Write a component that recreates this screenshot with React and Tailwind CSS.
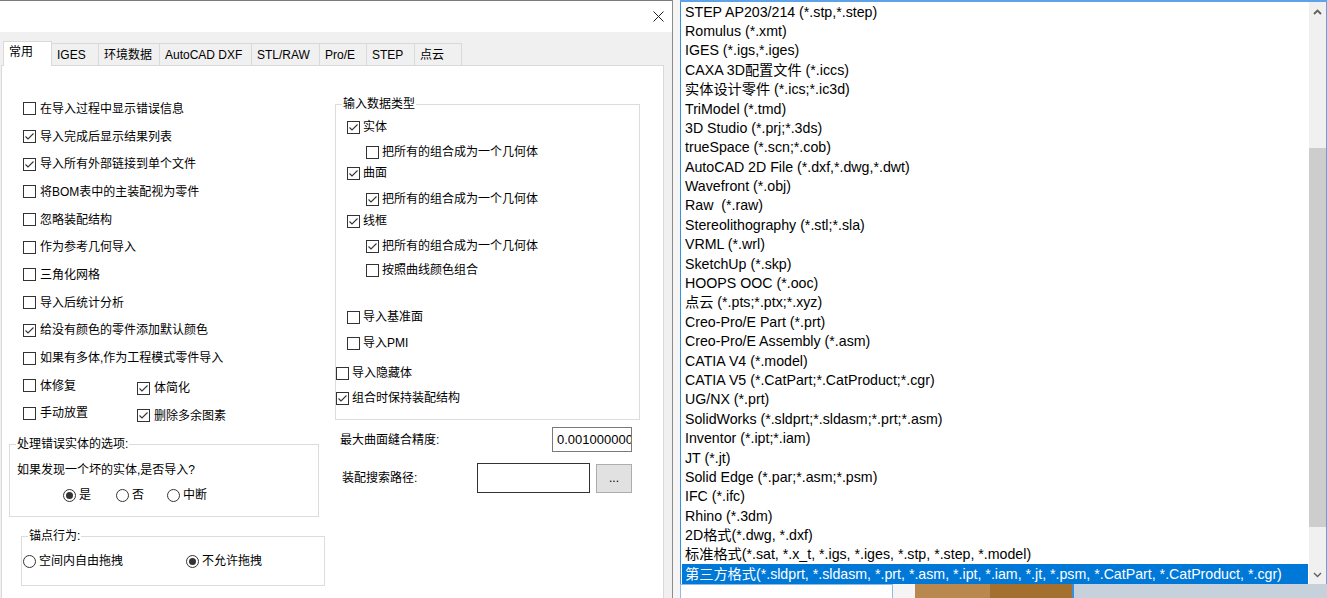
import React from 'react'

const fmts = [
    'STEP AP203/214 (*.stp,*.step)',
    'Romulus (*.xmt)',
    'IGES (*.igs,*.iges)',
    'CAXA 3D配置文件 (*.iccs)',
    '实体设计零件 (*.ics;*.ic3d)',
    'TriModel (*.tmd)',
    '3D Studio (*.prj;*.3ds)',
    'trueSpace (*.scn;*.cob)',
    'AutoCAD 2D File (*.dxf,*.dwg,*.dwt)',
    'Wavefront (*.obj)',
    'Raw  (*.raw)',
    'Stereolithography (*.stl;*.sla)',
    'VRML (*.wrl)',
    'SketchUp (*.skp)',
    'HOOPS OOC (*.ooc)',
    '点云 (*.pts;*.ptx;*.xyz)',
    'Creo-Pro/E Part (*.prt)',
    'Creo-Pro/E Assembly (*.asm)',
    'CATIA V4 (*.model)',
    'CATIA V5 (*.CatPart;*.CatProduct;*.cgr)',
    'UG/NX (*.prt)',
    'SolidWorks (*.sldprt;*.sldasm;*.prt;*.asm)',
    'Inventor (*.ipt;*.iam)',
    'JT (*.jt)',
    'Solid Edge (*.par;*.asm;*.psm)',
    'IFC (*.ifc)',
    'Rhino (*.3dm)',
    '2D格式(*.dwg, *.dxf)',
    '标准格式(*.sat, *.x_t, *.igs, *.iges, *.stp, *.step, *.model)',
    '第三方格式(*.sldprt, *.sldasm, *.prt, *.asm, *.ipt, *.iam, *.jt, *.psm, *.CatPart, *.CatProduct, *.cgr)',
]

const leftOpts = [
    ['在导入过程中显示错误信息', false],
    ['导入完成后显示结果列表', true],
    ['导入所有外部链接到单个文件', true],
    ['将BOM表中的主装配视为零件', false],
    ['忽略装配结构', false],
    ['作为参考几何导入', false],
    ['三角化网格', false],
    ['导入后统计分析', false],
    ['给没有颜色的零件添加默认颜色', true],
    ['如果有多体,作为工程模式零件导入', false],
]

const tabs = [
    ['IGES', 'w-[47px]'],
    ['环境数据', 'w-[61px]'],
    ['AutoCAD DXF', 'w-[92px]'],
    ['STL/RAW', 'w-[68px]'],
    ['Pro/E', 'w-[47px]'],
    ['STEP', 'w-[48px]'],
    ['点云', 'w-[47px]'],
]

function Check({ on }) {
    return (
        <span className="w-[13px] h-[13px] shrink-0 border border-[#333] bg-white flex items-center justify-center">
            {on && (
                <svg width="11" height="11" viewBox="0 0 11 11">
                    <polyline points="1.5,5.5 4,8 9.5,2.5" fill="none" stroke="#333" strokeWidth="1.1" />
                </svg>
            )}
        </span>
    )
}

function Radio({ on }) {
    return (
        <span className="w-[13px] h-[13px] shrink-0 rounded-full border border-[#333] bg-white flex items-center justify-center">
            {on && <span className="w-[7px] h-[7px] rounded-full bg-[#333]" />}
        </span>
    )
}

function CheckItem({ on, label, gap = 'gap-[4px]' }) {
    return (
        <div className={`flex items-center ${gap}`}>
            <Check on={on} />
            <span className="leading-[16px] whitespace-nowrap">{label}</span>
        </div>
    )
}

function RadioItem({ on, label, w }) {
    return (
        <div className={`flex items-center gap-[3px] ${w}`}>
            <Radio on={on} />
            <span className="leading-[16px] whitespace-nowrap">{label}</span>
        </div>
    )
}

export default function App() {
    return (
        <div className="w-[1327px] h-[598px] flex overflow-hidden bg-[#f0f0f0] text-black">

            {/* Dialogo de opciones de importacion */}
            <div className="w-[673px] h-full flex flex-col border-r border-[#8c8c8c] text-[12px] font-['Liberation_Sans','Noto_Sans_CJK_SC',sans-serif]">
                <div className="h-[32px] shrink-0 bg-white border-t border-[#7a7a7a] flex items-center justify-end pr-[8px]">
                    <svg width="11" height="11" viewBox="0 0 11 11">
                        <path d="M0.5 0.5 L10.5 10.5 M10.5 0.5 L0.5 10.5" stroke="#222" strokeWidth="1" />
                    </svg>
                </div>

                <div className="flex-1 min-h-0 flex flex-col pt-[9px] pl-[1px]">
                    {/* Pestanas */}
                    <div className="flex items-end ml-[2px] h-[24px]">
                        <div className="w-[49px] h-[25px] bg-white border-x border-t border-[#d9d9d9] relative z-10 -mb-[1px] pl-[5px] pt-[2px] leading-[16px]">
                            常用
                        </div>
                        {tabs.map(([t, w]) => (
                            <div key={t} className={`${w} h-[22px] bg-[#f0f0f0] border-t border-r border-[#d9d9d9] flex items-center pl-[5px] leading-[16px] whitespace-nowrap`}>
                                {t}
                            </div>
                        ))}
                    </div>

                    {/* Panel */}
                    <div className="w-[663px] flex-1 min-h-0 bg-white border border-b-0 border-[#d9d9d9] flex overflow-hidden">

                        {/* Columna izquierda */}
                        <div className="w-[333px] shrink-0 flex flex-col pt-[29px]">
                            {leftOpts.map(([t, on]) => (
                                <div key={t} className="h-[27.7px] flex items-center pl-[21px]">
                                    <CheckItem on={on} label={t} />
                                </div>
                            ))}
                            <div className="h-[27.7px] flex items-center pl-[21px]">
                                <div className="w-[114px]"><CheckItem on={false} label="体修复" /></div>
                                <div className="pt-[5px]"><CheckItem on={true} label="体简化" /></div>
                            </div>
                            <div className="h-[27.7px] flex items-center pl-[21px]">
                                <div className="w-[114px]"><CheckItem on={false} label="手动放置" /></div>
                                <div className="pt-[5px]"><CheckItem on={true} label="删除多余图素" /></div>
                            </div>

                            <fieldset className="ml-[7px] w-[310px] mt-[9px] border border-[#dcdcdc] pb-[11px]">
                                <legend className="ml-[6px] px-[1px] leading-[16px]">处理错误实体的选项:</legend>
                                <div className="h-[20px] mt-[8px] pl-[7px] flex items-center">如果发现一个坏的实体,是否导入?</div>
                                <div className="h-[20px] mt-[5px] pl-[53px] flex items-center">
                                    <RadioItem on={true} label="是" w="w-[53px]" />
                                    <RadioItem on={false} label="否" w="w-[51px]" />
                                    <RadioItem on={false} label="中断" w="" />
                                </div>
                            </fieldset>

                            <fieldset className="ml-[19px] w-[304px] mt-[11px] border border-[#dcdcdc] pb-[14px]">
                                <legend className="ml-[6px] px-[1px] leading-[16px]">锚点行为:</legend>
                                <div className="h-[20px] mt-[7px] pl-[1px] flex items-center">
                                    <RadioItem on={false} label="空间内自由拖拽" w="w-[163px]" />
                                    <RadioItem on={true} label="不允许拖拽" w="" />
                                </div>
                            </fieldset>
                        </div>

                        {/* Columna derecha */}
                        <div className="flex flex-col pt-[30px]">
                            <fieldset className="w-[305px] border border-[#dcdcdc] pb-[11px]">
                                <legend className="ml-[6px] px-[1px] leading-[16px]">输入数据类型</legend>
                                <div className="h-[20px] mt-[5px] pl-[11px] flex items-center"><CheckItem on={true} label="实体" gap="gap-[3px]" /></div>
                                <div className="h-[20px] mt-[5px] pl-[30px] flex items-center"><CheckItem on={false} label="把所有的组合成为一个几何体" gap="gap-[3px]" /></div>
                                <div className="h-[20px] mt-[1px] pl-[11px] flex items-center"><CheckItem on={true} label="曲面" gap="gap-[3px]" /></div>
                                <div className="h-[20px] mt-[6px] pl-[30px] flex items-center"><CheckItem on={true} label="把所有的组合成为一个几何体" gap="gap-[3px]" /></div>
                                <div className="h-[20px] mt-[2px] pl-[11px] flex items-center"><CheckItem on={true} label="线框" gap="gap-[3px]" /></div>
                                <div className="h-[20px] mt-[5px] pl-[30px] flex items-center"><CheckItem on={true} label="把所有的组合成为一个几何体" gap="gap-[3px]" /></div>
                                <div className="h-[20px] mt-[4px] pl-[30px] flex items-center"><CheckItem on={false} label="按照曲线颜色组合" gap="gap-[3px]" /></div>
                                <div className="h-[20px] mt-[27px] pl-[11px] flex items-center"><CheckItem on={false} label="导入基准面" gap="gap-[3px]" /></div>
                                <div className="h-[20px] mt-[6px] pl-[11px] flex items-center"><CheckItem on={false} label="导入PMI" gap="gap-[3px]" /></div>
                                <div className="h-[20px] mt-[10px] flex items-center"><CheckItem on={false} label="导入隐藏体" gap="gap-[3px]" /></div>
                                <div className="h-[20px] mt-[5px] flex items-center"><CheckItem on={true} label="组合时保持装配结构" gap="gap-[3px]" /></div>
                            </fieldset>

                            <div className="h-[25px] mt-[7px] pl-[5px] flex items-center">
                                <span className="w-[212px] leading-[16px]">最大曲面缝合精度:</span>
                                <div className="w-[80px] h-[25px] border border-[#7a7a7a] bg-white overflow-hidden pl-[4px] flex items-center text-[13px] whitespace-nowrap">
                                    0.001000000
                                </div>
                            </div>
                            <div className="h-[30px] mt-[11px] pl-[7px] flex items-center">
                                <span className="w-[135px] leading-[16px]">装配搜索路径:</span>
                                <div className="w-[113px] h-[30px] border border-[#333] bg-white" />
                                <div className="w-[36px] h-[29px] ml-[6px] bg-[#e1e1e1] border border-[#adadad] flex items-center justify-center leading-[16px]">
                                    ...
                                </div>
                            </div>
                        </div>
                    </div>
                </div>
            </div>

            {/* Separador */}
            <div className="w-[7px] h-full bg-[#f5f5f5]" />

            {/* Lista de formatos */}
            <div className="flex-1 h-full flex flex-col font-['Liberation_Sans','Noto_Sans_CJK_SC',sans-serif] text-[14.2px]">
                <div className="flex border-t-2 border-[#5ea3ea]">
                    <div className="flex-1 bg-white border-l border-[#3a8ee0] px-[1px]">
                        {fmts.map((f, i) => (
                            <div
                                key={i}
                                className={`h-[19.4px] flex items-center pl-[3px] pt-[1px] whitespace-pre overflow-hidden ${i === fmts.length - 1 ? 'bg-[#0078d7] text-white' : ''}`}
                            >
                                {f}
                            </div>
                        ))}
                    </div>
                    <div className="w-[17px] bg-[#f0f0f0] flex flex-col pt-[1px]">
                        <div className="h-[17px] flex items-center justify-center">
                            <svg width="9" height="6" viewBox="0 0 9 6">
                                <path d="M1 5 L4.5 1.5 L8 5" fill="none" stroke="#606060" strokeWidth="1.8" />
                            </svg>
                        </div>
                        <div className="flex-1">
                            <div className="mt-[128px] h-[379px] bg-[#cdcdcd]" />
                        </div>
                        <div className="h-[17px] flex items-center justify-center">
                            <svg width="9" height="6" viewBox="0 0 9 6">
                                <path d="M1 1 L4.5 4.5 L8 1" fill="none" stroke="#606060" strokeWidth="1.4" />
                            </svg>
                        </div>
                    </div>
                    <div className="w-[1px] bg-[#5ea3ea]" />
                </div>

                {/* Fondo por debajo de la lista */}
                <div className="flex-1 flex">
                    <div className="w-[213px] bg-white border-t border-x border-[#8fbbe6]" />
                    <div className="w-[22px] bg-[#f4f4f4]" />
                    <div className="w-[75px] bg-[#b8884e]" />
                    <div className="w-[82px] bg-[#a4702f]" />
                    <div className="w-[2px] bg-[#3a8ee0]" />
                    <div className="flex-1 bg-[#c6d1db]" />
                </div>
            </div>
        </div>
    )
}
